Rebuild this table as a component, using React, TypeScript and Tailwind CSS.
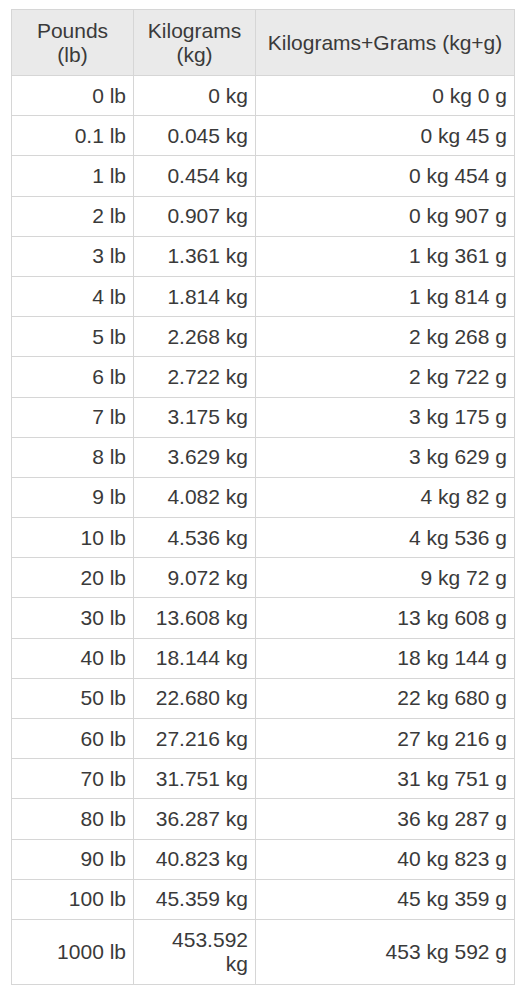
import React from 'react';

const rows: [string, string, string][] = [
  ['0 lb', '0 kg', '0 kg 0 g'],
  ['0.1 lb', '0.045 kg', '0 kg 45 g'],
  ['1 lb', '0.454 kg', '0 kg 454 g'],
  ['2 lb', '0.907 kg', '0 kg 907 g'],
  ['3 lb', '1.361 kg', '1 kg 361 g'],
  ['4 lb', '1.814 kg', '1 kg 814 g'],
  ['5 lb', '2.268 kg', '2 kg 268 g'],
  ['6 lb', '2.722 kg', '2 kg 722 g'],
  ['7 lb', '3.175 kg', '3 kg 175 g'],
  ['8 lb', '3.629 kg', '3 kg 629 g'],
  ['9 lb', '4.082 kg', '4 kg 82 g'],
  ['10 lb', '4.536 kg', '4 kg 536 g'],
  ['20 lb', '9.072 kg', '9 kg 72 g'],
  ['30 lb', '13.608 kg', '13 kg 608 g'],
  ['40 lb', '18.144 kg', '18 kg 144 g'],
  ['50 lb', '22.680 kg', '22 kg 680 g'],
  ['60 lb', '27.216 kg', '27 kg 216 g'],
  ['70 lb', '31.751 kg', '31 kg 751 g'],
  ['80 lb', '36.287 kg', '36 kg 287 g'],
  ['90 lb', '40.823 kg', '40 kg 823 g'],
  ['100 lb', '45.359 kg', '45 kg 359 g'],
  ['1000 lb', '453.592 kg', '453 kg 592 g'],
];

const App: React.FC = () => {
  return (
    <div className="bg-white pl-[11px] pt-[9px] pb-4 font-['Liberation_Sans',Arial,sans-serif] text-[#3a3a3a]">
      <table className="w-[503px] table-fixed border-collapse text-[21px] leading-[24px]">
        <colgroup>
          <col className="w-[122px]" />
          <col className="w-[122px]" />
          <col className="w-[259px]" />
        </colgroup>
        <thead>
          <tr className="bg-[#eaeaea]">
            <th className="border border-[#d6d6d6] px-2 py-[8.5px] text-center font-normal">Pounds<br />(lb)</th>
            <th className="border border-[#d6d6d6] px-2 py-[8.5px] text-center font-normal">Kilograms<br />(kg)</th>
            <th className="border border-[#d6d6d6] px-2 py-[8.5px] text-center font-normal">Kilograms+Grams (kg+g)</th>
          </tr>
        </thead>
        <tbody>
          {rows.map((r, i) => (
            <tr key={i}>
              {r.map((c, j) => (
                <td
                  key={j}
                  className={
                    i === rows.length - 1
                      ? 'border border-[#d6d6d6] pl-[15px] pr-[7px] py-[8px] text-right'
                      : 'border border-[#d6d6d6] pl-[15px] pr-[7px] py-[7.6px] text-right'
                  }
                >
                  {c}
                </td>
              ))}
            </tr>
          ))}
        </tbody>
      </table>
    </div>
  );
};

export default App;
